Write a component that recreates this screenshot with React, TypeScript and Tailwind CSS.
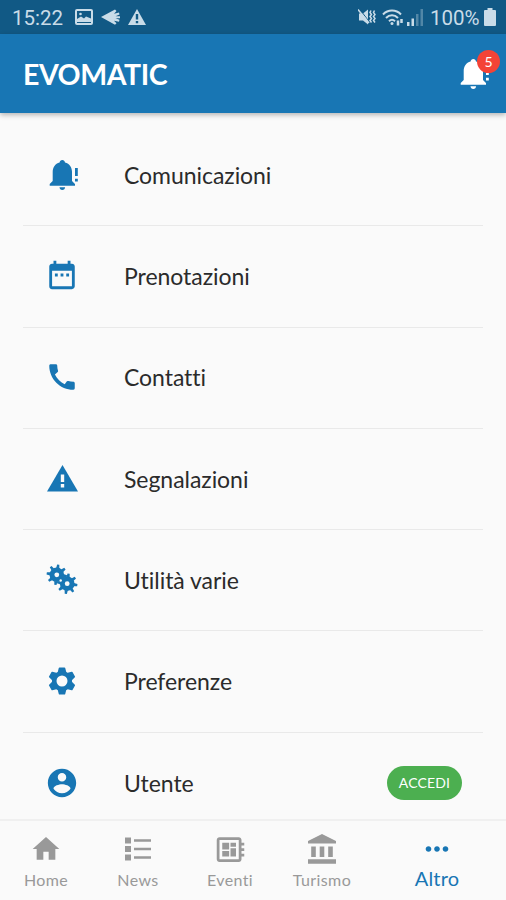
import type { ReactNode } from "react"
import { MdCall, MdDateRange, MdDeveloperBoard, MdHome, MdMoreHoriz } from "react-icons/md"

function BellAlert() {
  return (
    <svg viewBox="0 0 34 34" className="w-[34px] h-[34px]" fill="currentColor">
      <path d="M17.3 2c1.5 0 2.5 1 2.7 2.4 4.6 1.1 7 4.9 7 9.4v9.2l3 3.1v1.6H4.7v-1.6l3-3.1v-9.2c0-4.500 2.400-8.300 6.900-9.400C14.800 3 15.800 2 17.300 2z" />
      <path d="M14.5 29.3h5.600c0 1.600-1.200 2.700-2.800 2.700s-2.800-1.100-2.800-2.700z" />
      <path d="M30 10h2.800v8H30zM30 20.800h2.800v2.800H30z" />
    </svg>
  )
}

const teeth = [0, 45, 90, 135, 180, 225, 270, 315]

function Gear({ x, y }: { x: number; y: number }) {
  return (
    <g transform={`translate(${x} ${y})`} fill="currentColor">
      <circle r="7.3" />
      {teeth.map((angle) => (
        <path key={angle} d="M-1.6-6.5l.5-3.7h2.200l.5 3.700z" transform={`rotate(${angle + 8})`} />
      ))}
    </g>
  )
}

function Gears() {
  return (
    <svg viewBox="0 0 34 34" className="w-[34px] h-[34px]">
      <Gear x={11.8} y={11.8} />
      <Gear x={22.2} y={20.7} />
      <circle cx="11.8" cy="11.8" r="2.400" fill="#fafafa" />
      <circle cx="22.2" cy="20.7" r="2.400" fill="#fafafa" />
      <circle cx="15.7" cy="17.5" r="1.200" fill="#fafafa" />
    </svg>
  )
}

function Cog() {
  return (
    <svg viewBox="-17 -17 34 34" className="w-[34px] h-[34px]" stroke="currentColor" strokeLinejoin="round">
      <circle r="7.8" fill="none" strokeWidth="4.6" />
      {[0, 60, 120, 180, 240, 300].map((angle) => (
        <path key={angle} d="M-3.5-8.800l1-4h5l1 4z" transform={`rotate(${angle})`} fill="currentColor" strokeWidth="1.500" />
      ))}
    </svg>
  )
}

function Warning() {
  return (
    <svg viewBox="0 0 31 27" className="w-[31px] h-[27px]">
      <path d="M15.5 0L31 26.500H0z" fill="currentColor" />
      <path d="M13.8 9.500h3.400v7.500h-3.400zM13.800 19h3.400v3.400h-3.400z" fill="#fafafa" />
    </svg>
  )
}

function Account() {
  return (
    <svg viewBox="0 0 24 24" className="w-[34px] h-[34px]" fill="currentColor">
      <path d="M12 2C6.48 2 2 6.48 2 12s4.48 10 10 10 10-4.48 10-10S17.52 2 12 2zm0 3c1.66 0 3 1.34 3 3s-1.34 3-3 3-3-1.34-3-3 1.34-3 3-3zm0 14.2c-2.5 0-4.71-1.28-6-3.22.03-1.99 4-3.08 6-3.08 1.99 0 5.97 1.09 6 3.08-1.29 1.94-3.5 3.22-6 3.22z" />
    </svg>
  )
}

function ListIcon() {
  return (
    <svg viewBox="0 0 26 24" className="w-[26px] h-6" fill="currentColor">
      <path d="M0 .5h6v6H0zM0 9h6v6H0zM0 17.500h6v6H0zM9 2.300h17v2.500H9zM9 10.800h17v2.500H9zM9 19.300h17v2.500H9z" />
    </svg>
  )
}

function Museum() {
  return (
    <svg viewBox="0 0 28 30" className="w-7 h-[30px]" fill="currentColor">
      <path d="M14 0l14 7v2.500H0V7zM3.200 12.500h4.600V23H3.200zM11.700 12.500h4.600V23h-4.600zM20.200 12.500h4.600V23h-4.600zM0 25.200h28v4.500H0z" />
    </svg>
  )
}

const rows: { label: string; icon: ReactNode; action?: string }[] = [
  { label: "Comunicazioni", icon: <BellAlert /> },
  { label: "Prenotazioni", icon: <MdDateRange size={34} className="mb-[3px]" /> },
  { label: "Contatti", icon: <MdCall size={34} className="mb-px" /> },
  { label: "Segnalazioni", icon: <Warning /> },
  { label: "Utilità varie", icon: <Gears /> },
  { label: "Preferenze", icon: <Cog /> },
  { label: "Utente", icon: <Account />, action: "ACCEDI" },
]

const tabs = [
  { label: "Home", icon: <MdHome size={32} /> },
  { label: "News", icon: <ListIcon /> },
  { label: "Eventi", icon: <MdDeveloperBoard size={33} /> },
  { label: "Turismo", icon: <Museum /> },
]

function StatusBar() {
  return (
    <div className="h-[34px] shrink-0 bg-[#115985] text-[#c9dce8] flex items-center justify-between pl-3 pr-[10px] font-['Roboto',sans-serif] text-[20.5px]">
      <div className="flex items-center">
        <span className="w-[52px] leading-[34px] pt-0.5">15:22</span>
        <svg viewBox="0 0 18 16" className="w-[18px] h-4 ml-[11px]">
          <rect x="1" y="1" width="16" height="14" rx="1" fill="none" stroke="currentColor" strokeWidth="2" />
          <path d="M2 13v-3l4-2.500 3 2 2-2 5 2V13z" fill="currentColor" />
          <circle cx="5.5" cy="5" r="1.3" fill="currentColor" />
        </svg>
        <svg viewBox="0 0 19 16" className="w-[19px] h-4 ml-2" fill="currentColor">
          <path d="M0 8L14 .5l1.500 1.500-2.500 2.700 5-1.200.5 2-4 1.700h4.500v2h-4.500l4 1.500-.5 2-5-1 2.500 2.500-1.500 1.500z" />
        </svg>
        <svg viewBox="0 0 18 16" className="w-[18px] h-4 ml-2">
          <path d="M9 0l9 16H0z" fill="currentColor" />
          <path d="M7.8 5h2.400v5.500H7.800zM7.800 12h2.400v2.200H7.800z" fill="#115985" />
        </svg>
      </div>
      <div className="flex items-center">
        <svg viewBox="0 0 18 16" className="w-[18px] h-4">
          <path d="M1 4.500h4l5-4v15l-5-4H1z" fill="currentColor" />
          <path d="M1.500 0l10 13" stroke="#115985" strokeWidth="1" />
          <path d="M0 .5l11 13.500" stroke="currentColor" strokeWidth="1.5" />
          <path d="M13 1.500l-1 2 1.500 2-1.500 2 1.500 2-1.500 2 1.500 2M16.500 1.500l-1 2 1.500 2-1.500 2 1.500 2-1.500 2 1.500 2" fill="none" stroke="currentColor" strokeWidth="1.5" />
        </svg>
        <svg viewBox="0 0 22 17" className="w-[22px] h-[17px] ml-1.5" fill="none" stroke="currentColor" strokeWidth="2">
          <path d="M1 5.500C6 .3 14 .3 19 5.500M4 9c3.500-3.700 8.500-3.700 12 0M7 12.300c2-2 4-2 6 0" />
          <circle cx="10" cy="14.5" r="1.5" fill="currentColor" stroke="none" />
          <path d="M16 11.500v5M19.500 10v4" strokeWidth="2.5" />
        </svg>
        <svg viewBox="0 0 16 17" className="w-4 h-[17px] ml-[3px] mr-[7px]" fill="currentColor">
          <path d="M0 13h2.500v4H0zM4.500 9.500H7V17H4.500z" />
          <path d="M9 5h2.500v12H9zM13.500 0H16v17h-2.500z" opacity=".35" />
        </svg>
        <span className="leading-[34px] pt-0.5 w-[51px]">100%</span>
        <svg viewBox="0 0 12 18" className="w-3 h-[18px] ml-[3px]" fill="currentColor">
          <path d="M3.500 0h5v2H11q1 0 1 1v14q0 1-1 1H1q-1 0-1-1V3q0-1 1-1h2.500z" />
        </svg>
      </div>
    </div>
  )
}

export default function App() {
  return (
    <div className="w-[506px] h-[900px] overflow-hidden flex flex-col bg-[#fafafa] font-['Lato',sans-serif] [font-variant-ligatures:none]">
      <StatusBar />

      {/* App bar */}
      <header className="h-[79px] shrink-0 bg-[#1876b4] text-white flex items-center justify-between pl-[23px] pr-4 shadow-[0_2px_5px_rgba(0,0,0,0.28)]">
        <h1 className="text-[28.5px] font-bold tracking-[-0.45px] pt-0.5">EVOMATIC</h1>
        <div className="relative">
          <BellAlert />
          <span className="absolute -top-[7px] left-[21px] w-[23px] h-[23px] rounded-full bg-[#f44336] text-[14px] leading-[23px] text-center">
            5
          </span>
        </div>
      </header>

      {/* Menu */}
      <main className="flex-1 min-h-0 overflow-hidden pt-3 px-[23px]">
        {rows.map((row) => (
          <div key={row.label} className="h-[101.25px] border-b border-[#e9e9e9] last:border-0 flex items-center pl-[22px] pr-[21px]">
            <div className="w-[34px] flex justify-center text-[#1876b4]">{row.icon}</div>
            <span className="ml-[45px] flex-1 text-[23px] tracking-[-0.05px] text-[#2b2b2b]">{row.label}</span>
            {row.action && (
              <button className="w-[75px] h-[34px] rounded-full bg-[#4caf50] text-white text-[14px] tracking-[0.15px] pb-0.5">
                {row.action}
              </button>
            )}
          </div>
        ))}
      </main>

      {/* Bottom navigation */}
      <nav className="h-[81px] shrink-0 flex border-t-2 border-[#f0f0f0] text-[#999999]">
        {tabs.map((tab) => (
          <div key={tab.label} className="w-[92px] flex flex-col items-center pt-[11px]">
            <div className="h-[34px] flex items-center">{tab.icon}</div>
            <span className="text-[16px] tracking-[0.4px] leading-5 mt-1">{tab.label}</span>
          </div>
        ))}
        <div className="flex-1 flex flex-col items-center pt-[11px] text-[#1876b4]">
          <div className="h-[34px] flex items-center">
            <MdMoreHoriz size={34} />
          </div>
          <span className="text-[20px] tracking-[0.2px] leading-6">Altro</span>
        </div>
      </nav>
    </div>
  )
}
